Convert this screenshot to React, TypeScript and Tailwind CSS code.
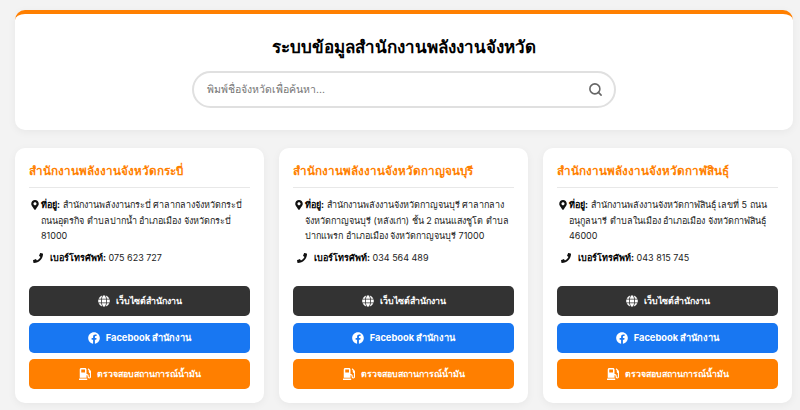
import { FaFacebook, FaGasPump, FaGlobe, FaMapMarkerAlt, FaPhone } from "react-icons/fa";
import { Search } from "lucide-react";

const offices = [
  {
    name: "สำนักงานพลังงานจังหวัดกระบี่",
    address: "สำนักงานพลังงานกระบี่ ศาลากลางจังหวัดกระบี่ ถนนอุตรกิจ ตำบลปากน้ำ อำเภอเมือง จังหวัดกระบี่ 81000",
    phone: "075 623 727",
  },
  {
    name: "สำนักงานพลังงานจังหวัดกาญจนบุรี",
    address: "สำนักงานพลังงานจังหวัดกาญจนบุรี ศาลากลางจังหวัดกาญจนบุรี (หลังเก่า) ชั้น 2 ถนนแสงชูโต ตำบลปากแพรก อำเภอเมือง จังหวัดกาญจนบุรี 71000",
    phone: "034 564 489",
  },
  {
    name: "สำนักงานพลังงานจังหวัดกาฬสินธุ์",
    address: "สำนักงานพลังงานจังหวัดกาฬสินธุ์ เลขที่ 5 ถนนอนุกูลนารี ตำบลในเมือง อำเภอเมือง จังหวัดกาฬสินธุ์ 46000",
    phone: "043 815 745",
  },
];

function OfficeCard({ office }: { office: (typeof offices)[number] }) {
  return (
    <div className="bg-white rounded-[10px] px-[14px] pt-[12px] pb-[14px] shadow-[0_2px_8px_rgba(0,0,0,0.05)]">
      <h2 className="text-[11.7px] leading-[20px] font-bold text-[#ff7f00] pt-[1px] pb-[6px] mb-[9px] border-b border-[#e8e8e8]">
        {office.name}
      </h2>
      <div className="text-[9px] leading-[15.5px] text-[#222] h-[47px] pl-[12px] relative">
        <FaMapMarkerAlt className="absolute left-[1px] top-[3px] text-[10px] text-[#111]" />
        <b className="text-black">ที่อยู่:</b> {office.address}
      </div>
      <div className="flex items-center text-[9px] leading-[16px] text-[#222] mt-[6px] pl-[4px] gap-[7px]">
        <FaPhone className="text-[10px] text-[#111]" />
        <span>
          <b className="text-black">เบอร์โทรศัพท์:</b> {office.phone}
        </span>
      </div>
      <div className="flex flex-col gap-[6.5px] mt-[20px]">
        <a className="h-[30px] rounded-[5px] bg-[#333333] text-white text-[8.8px] font-bold flex items-center justify-center gap-[6px]">
          <FaGlobe className="text-[12px]" />
          เว็บไซต์สำนักงาน
        </a>
        <a className="h-[30px] rounded-[5px] bg-[#1877f2] text-white text-[9.3px] font-bold flex items-center justify-center gap-[6px]">
          <FaFacebook className="text-[12px]" />
          Facebook สำนักงาน
        </a>
        <a className="h-[30px] rounded-[5px] bg-[#ff7f00] text-white text-[8.8px] font-bold flex items-center justify-center gap-[6px]">
          <FaGasPump className="text-[12px]" />
          ตรวจสอบสถานการณ์น้ำมัน
        </a>
      </div>
    </div>
  );
}

export default function App() {
  return (
    <div className="min-h-[410px] bg-[#f3f3f3] pt-[10px] pl-[15px] pr-[7px] font-['Inter','Noto_Sans',sans-serif]">
      <div className="h-[120px] bg-white rounded-[10px] border-t-[4px] border-[#ff7f00] shadow-[0_2px_8px_rgba(0,0,0,0.05)] flex flex-col items-center pt-[20px]">
        <h1 className="text-[17px] leading-[26px] font-bold text-black">ระบบข้อมูลสำนักงานพลังงานจังหวัด</h1>
        <div className="mt-[11px] w-[424px] h-[37px] rounded-full border-2 border-[#e0e0e0] flex items-center justify-between pl-[13px] pr-[11px]">
          <span className="text-[10.5px] text-[#757575]">พิมพ์ชื่อจังหวัดเพื่อค้นหา...</span>
          <Search size={15} strokeWidth={2.5} className="text-[#666]" />
        </div>
      </div>
      <div className="grid grid-cols-3 gap-[15px] mt-[18px] pb-[7px] w-[777px]">
        {offices.map((office) => (
          <OfficeCard key={office.name} office={office} />
        ))}
      </div>
    </div>
  );
}
